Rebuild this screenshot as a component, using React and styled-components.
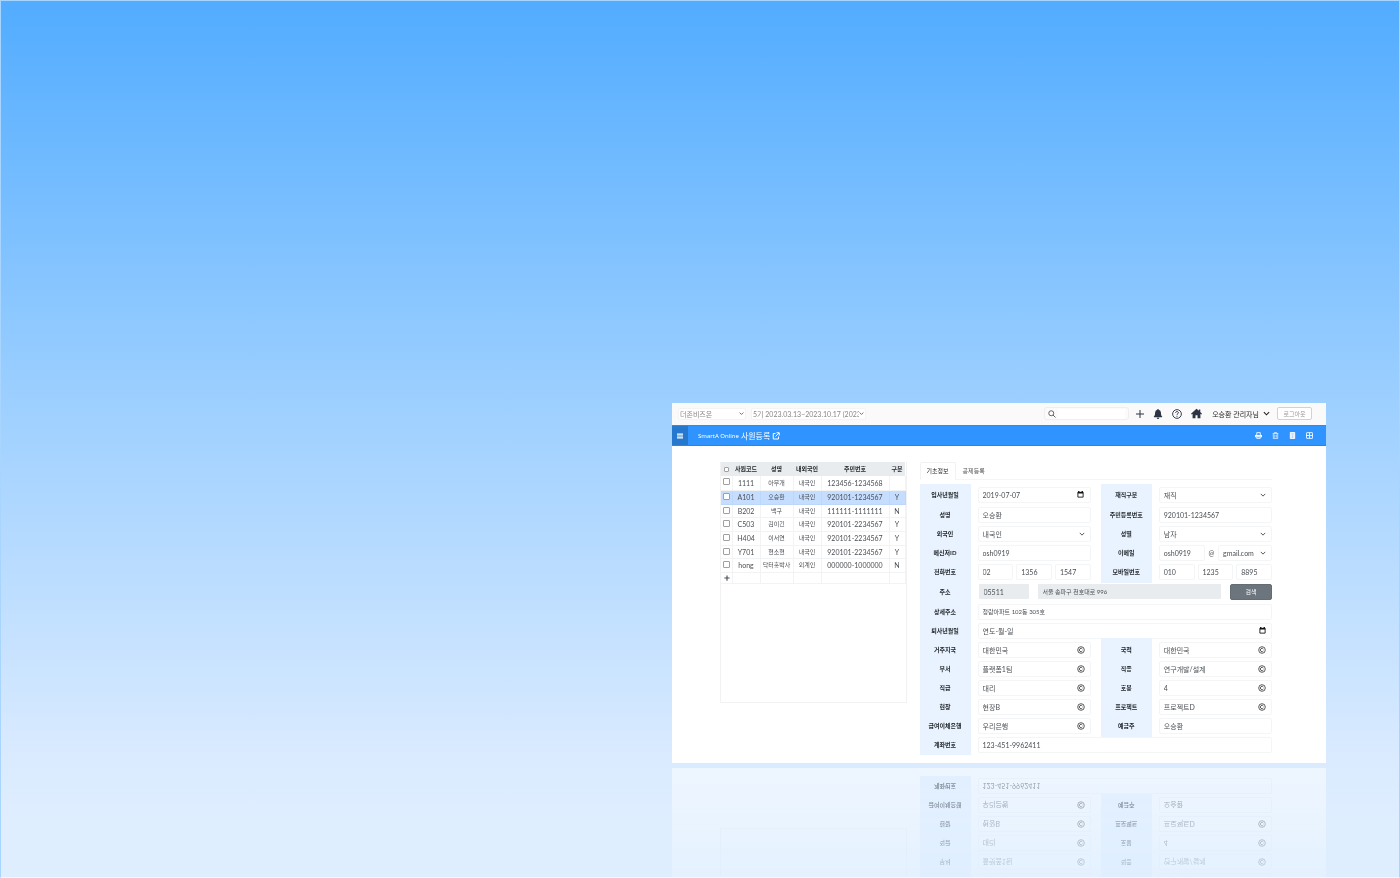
import React from 'react';
import styled, { createGlobalStyle, css } from 'styled-components';

const GlobalStyle = createGlobalStyle`
  *, *::before, *::after { box-sizing: border-box; }
  html, body { margin: 0; padding: 0; }
  body, button, input, select {
    font-family: Lato, "Noto Sans CJK KR", sans-serif;
    font-size: 7px;
    line-height: 12px;
    color: #4a4f54;
  }
`;

const Stage = styled.main`
  min-height: 100vh;
  overflow: hidden;
  border: 1px solid #a8d5fd;
  border-bottom-color: #f0f7ff;
  padding: 402px 73px 114px calc(48% - 1px);
  background: linear-gradient(#52acff 0%, #9ccfff 45%, #dbebff 87%, #deeeff 93%, #deeeff 100%);
`;

const Card = styled.section`
  background: #fff;
  -webkit-box-reflect: below 5px linear-gradient(transparent 52%, rgba(0, 0, 0, 0.52));
`;

const TopBar = styled.header`
  display: flex;
  align-items: center;
  height: 22px;
  padding: 0 14px 1px 6px;
  background: #fafafa;
`;

const Spacer = styled.div`
  flex: 1;
`;

const Control = styled.div`
  display: flex;
  align-items: center;
  flex: ${(p) => (p.$w ? `0 0 ${p.$w}px` : '1 1 0')};
  min-width: 0;
  height: 16px;
  padding: 0 5px 0 4px;
  background: #fff;
  border: 1px solid #f3f5f7;
  border-radius: 2px;
`;

const TopControl = styled(Control)`
  height: 12px;
  padding: 0 1px;
  margin-right: 5px;
  border-color: #f4f4f4;
`;

const entry = css`
  flex: 1;
  width: 0;
  min-width: 0;
  height: 12px;
  padding: 0;
  border: 0;
  outline: 0;
  background: transparent;
  font-size: ${(p) => (p.$small ? 6 : 7)}px;
  color: ${(p) => p.$color || '#4a4f54'};
`;

const Input = styled.input`
  ${entry}
`;

const Select = styled.select`
  ${entry}
  appearance: none;
  text-overflow: clip;
`;

const Search = styled(Control)`
  flex: 0 0 85px;
  height: 13px;
  padding: 0 3px;
  gap: 2px;
  border-color: #efefef;
  border-radius: 3px;
  background: #fbfbfb;
`;

const SearchInput = styled(Input)`
  height: 10px;
  background: #fff;
`;

const IconButton = styled.button`
  display: flex;
  align-items: center;
  justify-content: center;
  flex: none;
  width: ${(p) => p.$w || 8}px;
  height: ${(p) => p.$h || 12}px;
  padding: 0;
  border: 0;
  background: none;
  color: inherit;
`;

const Actions = styled.nav`
  display: flex;
  align-items: center;
  gap: 7px;
  margin: 0 9px 0 5px;
  color: #2b3344;
`;

const User = styled.button`
  display: flex;
  align-items: center;
  gap: 4px;
  padding: 0;
  margin-right: 7px;
  border: 0;
  background: none;
  font-size: 7px;
  color: #222;
  white-space: nowrap;
`;

const Logout = styled.button`
  width: 35px;
  height: 13px;
  padding: 0;
  border: 1px solid #d2d2d2;
  border-radius: 2px;
  background: #fff;
  font-size: 6px;
  line-height: 10px;
  color: #999;
`;

const TitleBar = styled.div`
  display: flex;
  align-items: center;
  height: 21px;
  padding-right: 13px;
  background: #2f94ff;
  border-top: 1px solid #2a8bf2;
  border-bottom: 1px solid #2a86e6;
  color: #fff;
`;

const MenuButton = styled(IconButton)`
  width: 16px;
  height: 19px;
  background: #2678cf;
`;

const Title = styled.h1`
  display: flex;
  align-items: center;
  gap: 2px;
  margin: 0 0 0 10px;
  font-size: 8px;
  font-weight: 400;
  white-space: nowrap;
`;

const Product = styled.span`
  font-family: "Noto Sans", sans-serif;
  font-size: 6px;
`;

const Tools = styled.div`
  display: flex;
  gap: 9px;
`;

const Content = styled.div`
  display: flex;
  align-items: flex-start;
  gap: 13px;
  padding: 16px 54px 8px 48px;
`;

const ListPanel = styled.div`
  flex: 0 0 186px;
  min-height: 241px;
  border: 1px solid #f2f2f2;
  border-top: 0;
`;

const Table = styled.table`
  width: 100%;
  table-layout: fixed;
  border-collapse: collapse;
  text-align: center;
  white-space: nowrap;
`;

const HeadCell = styled.th`
  width: ${(p) => p.$w}px;
  height: 14px;
  padding: 0;
  background: #e9ecef;
  font-size: 6px;
  font-weight: 700;
  color: #24282c;
`;

const Cell = styled.td`
  padding: 0;
  border: 1px solid #f1f3f5;
  border-width: 0 1px 1px 0;
  border-color: ${(p) => (p.$selected ? '#bdd7fa' : '#f1f3f5')};
  font-size: ${(p) => (p.$hangul ? 6 : 7)}px;
`;

const BodyRow = styled.tr`
  height: 14px;
  background: ${(p) => (p.$selected ? '#c5deff' : '#fff')};
  &:nth-child(3n) { height: 13px; }
`;

const AddRow = styled.tr`
  height: 11px;
  line-height: 10px;
`;

const Check = styled.input`
  appearance: none;
  display: block;
  width: ${(p) => p.$size}px;
  height: ${(p) => p.$size}px;
  margin: 0 auto;
  border: 1px solid #a0a0a0;
  border-radius: 1px;
  background: #fff;
`;

const CheckCell = styled(Cell)`
  vertical-align: top;
  padding-top: 2px;
`;

const FormPanel = styled.form`
  flex: 1;
  min-width: 0;
`;

const Tabs = styled.div`
  display: flex;
  height: 18px;
  margin-bottom: 4px;
  border-bottom: 1px solid #f3f5f7;
`;

const Tab = styled.button`
  height: 18px;
  padding: 0 6px;
  border: 1px solid ${(p) => (p.$active ? '#f0f2f4' : 'transparent')};
  border-bottom-color: ${(p) => (p.$active ? '#fff' : 'transparent')};
  border-radius: 2px 2px 0 0;
  background: none;
  font-size: 6px;
  color: ${(p) => (p.$active ? '#222' : '#555')};
`;

const Fields = styled.div`
  display: flex;
  flex-direction: column;
`;

const Row = styled.div`
  display: flex;
  height: ${(p) => p.$h || 19}px;
`;

const Label = styled.label`
  display: flex;
  align-items: center;
  justify-content: center;
  flex: 0 0 51px;
  background: #e8f3ff;
  font-size: 6px;
  font-weight: 700;
  color: #1d2125;
  white-space: nowrap;

  div + & { margin-left: 10px; }
  ${(p) => p.$edge && css`box-shadow: 0 ${p.$edge}px 0 #e8f3ff;`}
`;

const FieldCell = styled.div`
  display: flex;
  align-items: center;
  gap: 3px;
  flex: 1;
  min-width: 0;
  padding-left: 7px;
`;

const AddressCell = styled(FieldCell)`
  gap: 9px;
  padding-left: 8px;
`;

const ReadOnly = styled.input`
  flex: ${(p) => (p.$w ? `0 0 ${p.$w}px` : '1')};
  min-width: 0;
  width: 0;
  height: 15px;
  padding: 0 5px;
  border: 0;
  border-radius: 1px;
  background: #e9ecef;
  font-size: ${(p) => (p.$small ? 6 : 7)}px;
`;

const SearchButton = styled.button`
  flex: 0 0 42px;
  height: 16px;
  padding: 0;
  border: 1px solid #646c74;
  border-radius: 2px;
  background: #6c757d;
  font-size: 6px;
  color: #fff;
`;

const At = styled.span`
  flex: 0 0 7px;
  text-align: center;
`;

const Drawing = styled.svg`
  flex: none;
`;

const Svg = ({ size = 8, children, ...rest }) => (
  <Drawing width={size} height={size} viewBox="0 0 16 16" fill="none" stroke="currentColor" strokeWidth="2" aria-hidden="true" {...rest}>
    {children}
  </Drawing>
);

const Chevron = ({ size = 6, width = 2.5 }) => (
  <Svg size={size} strokeWidth={width}><path d="M2 5l6 6 6-6" /></Svg>
);
const Calendar = () => (
  <Svg size={7} color="#111"><path d="M2 3h12v11H2z" /><path d="M2 4h12M4 0v3M12 0v3" strokeWidth="3" /></Svg>
);
const Copyright = () => (
  <Svg size={8} color="#333" strokeWidth="1.6"><circle cx="8" cy="8" r="6.6" /><path d="M10.8 6.2a3.3 3.3 0 1 0 0 3.6" /></Svg>
);

const Field = ({ id, label, value, icon, w, small }) => (
  <Control $w={w}>
    <Input id={id} aria-label={label} defaultValue={value} $small={small} />
    {icon === 'date' && <IconButton type="button" aria-label="날짜 선택"><Calendar /></IconButton>}
    {icon === 'code' && <IconButton type="button" aria-label="코드 검색"><Copyright /></IconButton>}
  </Control>
);

const Dropdown = ({ id, label, value, w }) => (
  <Control $w={w}>
    <Select id={id} aria-label={label} defaultValue={value}><option>{value}</option></Select>
    <Chevron />
  </Control>
);

const employees = [
  ['1111', '아무개', '내국인', '123456-1234568', ''],
  ['A101', '오승환', '내국인', '920101-1234567', 'Y'],
  ['B202', '백구', '내국인', '111111-1111111', 'N'],
  ['C503', '김이긴', '내국인', '920101-2234567', 'Y'],
  ['H404', '이서연', '내국인', '920101-2234567', 'Y'],
  ['Y701', '현소현', '내국인', '920101-2234567', 'Y'],
  ['hong', '닥터홍박사', '외계인', '000000-1000000', 'N'],
];

const codeRows = [
  ['거주지국', '대한민국', '국적', '대한민국'],
  ['부서', '플랫폼1팀', '직종', '연구개발/설계'],
  ['직급', '대리', '호봉', '4'],
  ['현장', '현장B', '프로젝트', '프로젝트D'],
  ['급여이체은행', '우리은행', '예금주', '오승환'],
];

function EmployeeList() {
  return (
    <ListPanel>
      <Table>
        <thead>
          <tr>
            <HeadCell $w={11}><Check type="checkbox" $size={5} aria-label="전체 선택" /></HeadCell>
            <HeadCell $w={28}>사원코드</HeadCell>
            <HeadCell $w={33}>성명</HeadCell>
            <HeadCell $w={28}>내외국인</HeadCell>
            <HeadCell $w={68}>주민번호</HeadCell>
            <HeadCell $w={16}>구분</HeadCell>
          </tr>
        </thead>
        <tbody>
          {employees.map(([code, name, nation, ssn, kind]) => {
            const selected = code === 'A101';
            return (
              <BodyRow key={code} $selected={selected}>
                <CheckCell $selected={selected}><Check type="checkbox" $size={7} aria-label={code} /></CheckCell>
                <Cell $selected={selected}>{code}</Cell>
                <Cell $selected={selected} $hangul>{name}</Cell>
                <Cell $selected={selected} $hangul>{nation}</Cell>
                <Cell $selected={selected}>{ssn}</Cell>
                <Cell $selected={selected}>{kind}</Cell>
              </BodyRow>
            );
          })}
          <AddRow>
            <Cell>
              <IconButton type="button" $w={11} $h={10} aria-label="추가"><Svg size={6} strokeWidth="3"><path d="M8 1v14M1 8h14" /></Svg></IconButton>
            </Cell>
            <Cell /><Cell /><Cell /><Cell /><Cell />
          </AddRow>
        </tbody>
      </Table>
    </ListPanel>
  );
}

function EmployeeForm() {
  return (
    <FormPanel>
      <Tabs>
        <Tab type="button" $active>기초정보</Tab>
        <Tab type="button">공제등록</Tab>
      </Tabs>
      <Fields>
        <Row $h={21}>
          <Label htmlFor="joined">입사년월일</Label>
          <FieldCell><Field id="joined" value="2019-07-07" icon="date" /></FieldCell>
          <Label htmlFor="status">재직구분</Label>
          <FieldCell><Dropdown id="status" value="재직" /></FieldCell>
        </Row>
        <Row>
          <Label htmlFor="name">성명</Label>
          <FieldCell><Field id="name" value="오승환" /></FieldCell>
          <Label htmlFor="ssn">주민등록번호</Label>
          <FieldCell><Field id="ssn" value="920101-1234567" /></FieldCell>
        </Row>
        <Row>
          <Label htmlFor="foreign">외국인</Label>
          <FieldCell><Dropdown id="foreign" value="내국인" /></FieldCell>
          <Label htmlFor="gender">성별</Label>
          <FieldCell><Dropdown id="gender" value="남자" /></FieldCell>
        </Row>
        <Row>
          <Label htmlFor="messenger">메신저ID</Label>
          <FieldCell><Field id="messenger" value="osh0919" /></FieldCell>
          <Label htmlFor="email">이메일</Label>
          <FieldCell>
            <Field id="email" value="osh0919" />
            <At>@</At>
            <Dropdown label="이메일 도메인" value="gmail.com" w={54} />
          </FieldCell>
        </Row>
        <Row>
          <Label htmlFor="phone">전화번호</Label>
          <FieldCell>
            <Field id="phone" value="02" />
            <Field label="전화번호 중간" value="1356" />
            <Field label="전화번호 끝" value="1547" />
          </FieldCell>
          <Label htmlFor="mobile" $edge={2}>모바일번호</Label>
          <FieldCell>
            <Field id="mobile" value="010" />
            <Field label="모바일번호 중간" value="1235" />
            <Field label="모바일번호 끝" value="8895" />
          </FieldCell>
        </Row>
        <Row $h={21}>
          <Label htmlFor="zip">주소</Label>
          <AddressCell>
            <ReadOnly id="zip" $w={50} defaultValue="05511" readOnly />
            <ReadOnly aria-label="주소" defaultValue="서울 송파구 천호대로 996" readOnly $small />
            <SearchButton type="button">검색</SearchButton>
          </AddressCell>
        </Row>
        <Row>
          <Label htmlFor="detail">상세주소</Label>
          <FieldCell><Field id="detail" value="청람아파트 102동 305호" small /></FieldCell>
        </Row>
        <Row>
          <Label htmlFor="left">퇴사년월일</Label>
          <FieldCell><Field id="left" value="연도-월-일" icon="date" /></FieldCell>
        </Row>
        {codeRows.map(([a, av, b, bv], i) => (
          <Row key={a}>
            <Label htmlFor={`a${i}`}>{a}</Label>
            <FieldCell><Field id={`a${i}`} value={av} icon="code" /></FieldCell>
            <Label htmlFor={`b${i}`} $edge={i === 0 ? -2 : i === 4 ? 2 : 0}>{b}</Label>
            <FieldCell><Field id={`b${i}`} value={bv} icon={i < 4 ? 'code' : undefined} /></FieldCell>
          </Row>
        ))}
        <Row $h={20}>
          <Label htmlFor="account">계좌번호</Label>
          <FieldCell><Field id="account" value="123-451-9962411" /></FieldCell>
        </Row>
      </Fields>
    </FormPanel>
  );
}

export default function App() {
  return (
    <>
      <GlobalStyle />
      <Stage>
        <Card>
          <TopBar>
            <TopControl $w={68}>
              <Select aria-label="회사" $color="#888"><option>더존비즈온</option></Select>
              <Chevron size={5} />
            </TopControl>
            <TopControl $w={115}>
              <Select aria-label="회계기수" $color="#888"><option>5기 2023.03.13~2023.10.17 (2023년)</option></Select>
              <Chevron size={5} />
            </TopControl>
            <Spacer />
            <Search as="label">
              <Svg size={8} color="#555" strokeWidth="1.8"><circle cx="6.5" cy="6.5" r="5" /><path d="M10 10l5 5" /></Svg>
              <SearchInput type="search" aria-label="검색" />
            </Search>
            <Actions>
              <IconButton $w={11} aria-label="추가"><Svg size={8}><path d="M8 0v16M0 8h16" /></Svg></IconButton>
              <IconButton $w={12} aria-label="알림">
                <Svg size={10} fill="currentColor" stroke="none"><path d="M8 0a1.2 1.2 0 0 0-1.2 1.3A5 5 0 0 0 3.3 6c0 3.6-.8 4.8-1.9 6-.5.6-.1 1.3.6 1.3h12c.7 0 1.1-.7.6-1.3-1.1-1.2-1.9-2.4-1.9-6a5 5 0 0 0-3.500-4.700A1.2 1.2 0 0 0 8 0zM6 14a2 2 0 0 0 4 0z" /></Svg>
              </IconButton>
              <IconButton $w={11} aria-label="도움말">
                <Svg size={10} strokeWidth="1.5"><circle cx="8" cy="8" r="7" /><path d="M5.8 6.2c0-3 4.6-2.7 4.4-.2C10.1 7.5 8 7.5 8 9.4M8 10.8v1.7" /></Svg>
              </IconButton>
              <IconButton $w={14} aria-label="홈">
                <Svg size={11} fill="currentColor" stroke="none"><path d="M8 1L0 8.2l1 1.2 1.3-1V15h4.200v-4.500h3V15h4.200V8.400l1.300 1 1-1.200-2.500-2.300V2h-2v2.100z" /></Svg>
              </IconButton>
            </Actions>
            <User type="button">오승환 관리자님 <Chevron size={7} /></User>
            <Logout type="button">로그아웃</Logout>
          </TopBar>
          <TitleBar>
            <MenuButton aria-label="메뉴"><Svg size={6}><path d="M0 3h16M0 8h16M0 13h16" strokeWidth="2.8" /></Svg></MenuButton>
            <Title>
              <Product>SmartA Online</Product> 사원등록
              <Svg size={8}><path d="M7 3H2.5v11H13V9M9 1.5h5.500V7M14 2L7 9" /></Svg>
            </Title>
            <Spacer />
            <Tools>
              <IconButton aria-label="인쇄">
                <Svg size={7}><path d="M4 7V1.5h8V7M4 14.5h8V11H4z" /><path d="M0 7h16v5h-3v-2H3v2H0z" fill="currentColor" stroke="none" /></Svg>
              </IconButton>
              <IconButton aria-label="삭제">
                <Svg size={7} strokeWidth="1.8" opacity=".85"><path d="M1.5 3.500h13M5.500 3V1h5v2M3 4v11h10V4M6.200 6v7M9.800 6v7" /></Svg>
              </IconButton>
              <IconButton aria-label="계산기">
                <Svg size={7}><path d="M3 1h10v14H3z" fill="currentColor" /><path d="M5 4.5h6M6 9h4M6 12h4" stroke="#2f94ff" strokeWidth="1.2" /></Svg>
              </IconButton>
              <IconButton aria-label="설정">
                <Svg size={7}><rect x="1" y="1.5" width="14" height="13" rx="1" /><path d="M8 2v12M1 8h14" /></Svg>
              </IconButton>
            </Tools>
          </TitleBar>
          <Content>
            <EmployeeList />
            <EmployeeForm />
          </Content>
        </Card>
      </Stage>
    </>
  );
}
